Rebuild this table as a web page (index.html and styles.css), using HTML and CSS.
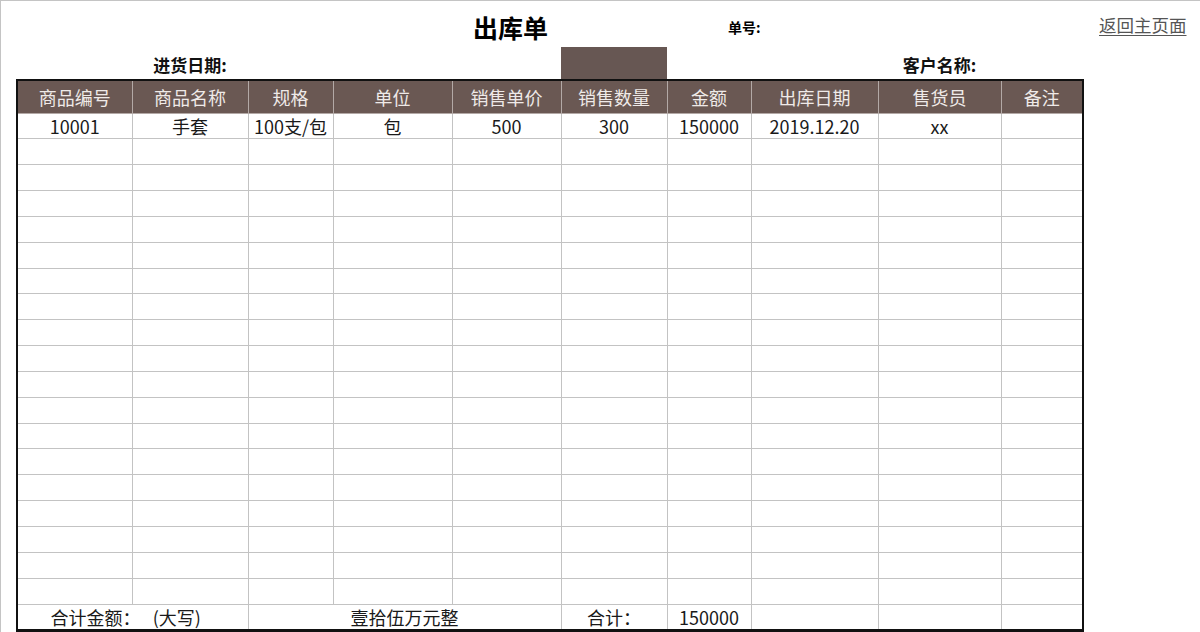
FILE: index.html
```html
<!DOCTYPE html>
<html lang="zh-CN">
<head>
<meta charset="utf-8">
<title>出库单</title>
<link rel="stylesheet" href="styles.css">
</head>
<body>
<div class="sheet">
  <div class="top">
    <h1 class="title">出库单</h1>
    <div class="order-no">单号:</div>
    <a class="home" href="#">返回主页面</a>
    <div class="label date-label">进货日期:</div>
    <div class="fill-box"></div>
    <div class="label customer-label">客户名称:</div>
  </div>
  <div class="frame">
    <table class="grid">
      <colgroup>
        <col class="c1"><col class="c2"><col class="c3"><col class="c4"><col class="c5">
        <col class="c6"><col class="c7"><col class="c8"><col class="c9"><col class="c10">
      </colgroup>
      <thead>
        <tr class="head">
          <th>商品编号</th><th>商品名称</th><th>规格</th><th>单位</th><th>销售单价</th>
          <th>销售数量</th><th>金额</th><th>出库日期</th><th>售货员</th><th>备注</th>
        </tr>
      </thead>
      <tbody>
        <tr><td>10001</td><td>手套</td><td>100支/包</td><td>包</td><td>500</td><td>300</td><td>150000</td><td>2019.12.20</td><td>xx</td><td></td></tr>
        <tr><td></td><td></td><td></td><td></td><td></td><td></td><td></td><td></td><td></td><td></td></tr>
        <tr><td></td><td></td><td></td><td></td><td></td><td></td><td></td><td></td><td></td><td></td></tr>
        <tr><td></td><td></td><td></td><td></td><td></td><td></td><td></td><td></td><td></td><td></td></tr>
        <tr><td></td><td></td><td></td><td></td><td></td><td></td><td></td><td></td><td></td><td></td></tr>
        <tr><td></td><td></td><td></td><td></td><td></td><td></td><td></td><td></td><td></td><td></td></tr>
        <tr><td></td><td></td><td></td><td></td><td></td><td></td><td></td><td></td><td></td><td></td></tr>
        <tr><td></td><td></td><td></td><td></td><td></td><td></td><td></td><td></td><td></td><td></td></tr>
        <tr><td></td><td></td><td></td><td></td><td></td><td></td><td></td><td></td><td></td><td></td></tr>
        <tr><td></td><td></td><td></td><td></td><td></td><td></td><td></td><td></td><td></td><td></td></tr>
        <tr><td></td><td></td><td></td><td></td><td></td><td></td><td></td><td></td><td></td><td></td></tr>
        <tr><td></td><td></td><td></td><td></td><td></td><td></td><td></td><td></td><td></td><td></td></tr>
        <tr><td></td><td></td><td></td><td></td><td></td><td></td><td></td><td></td><td></td><td></td></tr>
        <tr><td></td><td></td><td></td><td></td><td></td><td></td><td></td><td></td><td></td><td></td></tr>
        <tr><td></td><td></td><td></td><td></td><td></td><td></td><td></td><td></td><td></td><td></td></tr>
        <tr><td></td><td></td><td></td><td></td><td></td><td></td><td></td><td></td><td></td><td></td></tr>
        <tr><td></td><td></td><td></td><td></td><td></td><td></td><td></td><td></td><td></td><td></td></tr>
        <tr><td></td><td></td><td></td><td></td><td></td><td></td><td></td><td></td><td></td><td></td></tr>
        <tr><td></td><td></td><td></td><td></td><td></td><td></td><td></td><td></td><td></td><td></td></tr>
      </tbody>
      <tfoot>
        <tr class="total">
          <td colspan="2" class="sum-label">合计金额：&nbsp;&nbsp;&nbsp;(大写)</td>
          <td colspan="3">壹拾伍万元整</td>
          <td>合计：</td>
          <td>150000</td>
          <td></td><td></td><td></td>
        </tr>
      </tfoot>
    </table>
  </div>
</div>
</body>
</html>
```

FILE: styles.css
```css
* { box-sizing: border-box; }

html, body {
  margin: 0;
  padding: 0;
  background: #ffffff;
}

body {
  font-family: "Noto Sans CJK SC", "Noto Sans", sans-serif;
  color: #1a1a1a;
  overflow: hidden;
}

.sheet {
  width: 1200px;
  height: 632px;
  border-top: 1px solid #c4c4c4;
  border-left: 1px solid #c4c4c4;
  padding-left: 15px;
}

/* ---------- top area ---------- */
.top {
  display: grid;
  grid-template-columns: 116px 116px 85px 119px 109px 106px 84px 127px 123px 83px 1fr;
  grid-template-rows: 46px 32px;
}

.title {
  grid-column: 5;
  grid-row: 1;
  justify-self: center;
  align-self: center;
  margin: 6px 0 0 8px;
  font-size: 25px;
  font-weight: 700;
  line-height: 1;
  color: #000;
  white-space: nowrap;
}

.order-no {
  grid-column: 7 / 9;
  grid-row: 1;
  align-self: center;
  margin: 6px 0 0 61px;
  font-size: 14px;
  font-weight: 700;
  color: #000;
  white-space: nowrap;
}

.home {
  grid-column: 11;
  grid-row: 1;
  align-self: center;
  margin: 0 0 0 15px;
  font-size: 17.5px;
  color: #555;
  text-decoration: underline;
  text-underline-offset: 3px;
  white-space: nowrap;
}

.label {
  grid-row: 2;
  align-self: center;
  justify-self: center;
  margin-top: 3px;
  font-size: 17px;
  font-weight: 700;
  color: #111;
  white-space: nowrap;
}

.date-label { grid-column: 2; }
.customer-label { grid-column: 9; }

.fill-box {
  grid-column: 6;
  grid-row: 2;
  background: #675753;
}

/* ---------- table ---------- */
.frame {
  width: 1068px;
  border: 2px solid #111;
  border-bottom-width: 3px;
}

.grid {
  width: 1064px;
  border-collapse: collapse;
  border-style: hidden;
  table-layout: fixed;
  font-size: 18px;
}

.c1 { width: 114px; }
.c2 { width: 116px; }
.c3 { width: 85px; }
.c4 { width: 119px; }
.c5 { width: 109px; }
.c6 { width: 106px; }
.c7 { width: 84px; }
.c8 { width: 127px; }
.c9 { width: 123px; }
.c10 { width: 81px; }

.grid th,
.grid td {
  border: 1px solid #c3c3c3;
  padding: 0;
  text-align: center;
  vertical-align: middle;
  white-space: nowrap;
  overflow: hidden;
  line-height: 1;
}

.grid tbody tr { height: 25.85px; }

.head { height: 32px; }

.head th {
  background: #6a5853;
  color: #efeae8;
  font-weight: 400;
  border-color: #b3a9a6;
}

.total { height: 25px; }

.grid .sum-label { padding-right: 14px; }
```
